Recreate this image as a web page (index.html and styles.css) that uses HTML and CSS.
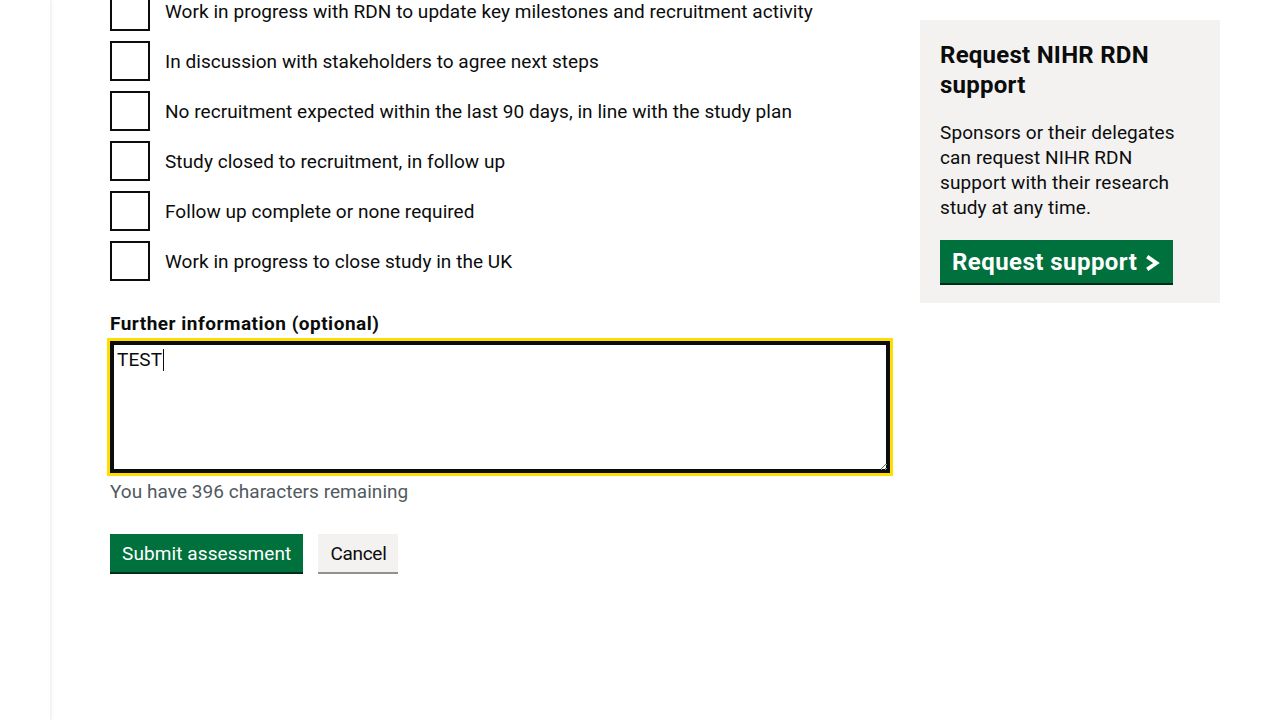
FILE: index.html
```html
<!DOCTYPE html>
<html lang="en">
<head>
<meta charset="utf-8">
<title>Assessment</title>
<link rel="stylesheet" href="styles.css">
</head>
<body>
<div class="page">
  <nav class="side-nav" aria-label="Side navigation"></nav>
  <main class="main">
    <form class="form-col">
      <div class="checkboxes">
        <div class="cb-item"><input class="cb-input" type="checkbox" id="c1"><label class="cb-label" for="c1">Work in progress with RDN to update key milestones and recruitment activity</label></div>
        <div class="cb-item"><input class="cb-input" type="checkbox" id="c2"><label class="cb-label" for="c2">In discussion with stakeholders to agree next steps</label></div>
        <div class="cb-item"><input class="cb-input" type="checkbox" id="c3"><label class="cb-label" for="c3">No recruitment expected within the last 90 days, in line with the study plan</label></div>
        <div class="cb-item"><input class="cb-input" type="checkbox" id="c4"><label class="cb-label" for="c4">Study closed to recruitment, in follow up</label></div>
        <div class="cb-item"><input class="cb-input" type="checkbox" id="c5"><label class="cb-label" for="c5">Follow up complete or none required</label></div>
        <div class="cb-item"><input class="cb-input" type="checkbox" id="c6"><label class="cb-label" for="c6">Work in progress to close study in the UK</label></div>
      </div>
      <div class="form-group">
        <label class="field-label" for="info">Further information (optional)</label>
        <div class="textarea-wrap">
          <textarea class="textarea is-focused" id="info" rows="5">TEST</textarea>
          <span class="caret"></span>
        </div>
        <div class="hint">You have 396 characters remaining</div>
      </div>
      <div class="actions">
        <button type="button" class="btn btn-primary">Submit assessment</button>
        <button type="button" class="btn btn-secondary">Cancel</button>
      </div>
    </form>
    <aside class="panel">
      <h2 class="panel-title">Request NIHR RDN support</h2>
      <p class="panel-text">Sponsors or their delegates can request NIHR RDN support with their research study at any time.</p>
      <a class="btn btn-primary btn-large" href="#">Request support
        <svg class="chevron" width="15" height="16" viewBox="0 0 15 16" aria-hidden="true"><path d="M2.2 1.6 L11.4 8 L2.2 14.4" fill="none" stroke="#fff" stroke-width="3.8" stroke-linejoin="miter" stroke-miterlimit="2"/></svg>
      </a>
    </aside>
  </main>
</div>
</body>
</html>
```
FILE: styles.css
```css
* { box-sizing: border-box; }
html, body { margin: 0; padding: 0; }
body {
  font-family: Roboto, "Liberation Sans", Arial, sans-serif;
  color: #0b0c0c;
  background: #fff;
  font-size: 19px;
  line-height: 25px;
  letter-spacing: 0.05px;
}
.page {
  display: flex;
  min-height: 720px;
  overflow: hidden;
}
.side-nav {
  width: 50px;
  flex: 0 0 50px;
  background: #fff;
  box-shadow: 1px 0 4px rgba(0, 0, 0, 0.09);
}
.main {
  flex: 1;
  display: grid;
  grid-template-columns: 780px 300px;
  column-gap: 30px;
  padding-left: 60px;
  align-items: start;
}
.form-col {
  margin-top: -9px;
}
.checkboxes {
  display: flex;
  flex-direction: column;
  gap: 10px;
  margin-bottom: 30px;
}
.cb-item {
  display: flex;
  align-items: flex-start;
  min-height: 40px;
}
.cb-input {
  appearance: none;
  -webkit-appearance: none;
  margin: 0;
  width: 40px;
  height: 40px;
  flex: 0 0 40px;
  border: 2px solid #0b0c0c;
  background: #fff;
}
.cb-label {
  padding: 8px 15px 5px;
  font-size: 19px;
  line-height: 25px;
}
.form-group {
  margin-bottom: 30px;
}
.field-label {
  display: block;
  font-weight: 700;
  font-size: 19px;
  line-height: 25px;
  margin-bottom: 5px;
  letter-spacing: 0.5px;
}
.textarea-wrap {
  position: relative;
}
.textarea {
  display: block;
  width: 100%;
  font-family: Roboto, "Liberation Sans", Arial, sans-serif;
  font-size: 19px;
  line-height: 23.75px;
  letter-spacing: 0.1px;
  color: #0b0c0c;
  padding: 5px;
  border: 2px solid #0b0c0c;
  border-radius: 0;
  margin: 0;
  resize: vertical;
  height: 132px;
}
.textarea.is-focused {
  outline: 3px solid #ffdd00;
  outline-offset: 0;
  box-shadow: inset 0 0 0 2px #0b0c0c;
}
.caret {
  position: absolute;
  left: 53px;
  top: 8px;
  width: 1px;
  height: 22px;
  background: #0b0c0c;
}
.hint {
  margin-top: 6px;
  color: #505a5f;
  font-size: 19px;
  line-height: 25px;
}
.actions {
  display: flex;
  gap: 15px;
  align-items: flex-start;
}
.btn {
  display: inline-flex;
  align-items: center;
  font-family: Roboto, "Liberation Sans", Arial, sans-serif;
  font-size: 19px;
  line-height: 19px;
  letter-spacing: 0.1px;
  padding: 8px 10px 7px;
  border: 2px solid transparent;
  border-radius: 0;
  margin: 0;
  cursor: pointer;
  text-decoration: none;
}
.btn-primary {
  background: #00703c;
  color: #fff;
  box-shadow: 0 2px 0 #002d18;
}
.btn-secondary {
  background: #f3f2f1;
  color: #0b0c0c;
  box-shadow: 0 2px 0 #929191;
  letter-spacing: -0.3px;
}
.panel {
  margin-top: 20px;
  background: #f3f2f1;
  padding: 20px;
}
.panel-title {
  margin: 0 0 20px;
  font-size: 24px;
  line-height: 30px;
  font-weight: 700;
  letter-spacing: 0.25px;
}
.panel-text {
  margin: 0 0 20px;
  font-size: 19px;
  line-height: 25px;
  letter-spacing: 0.1px;
}
.btn-large {
  font-size: 24px;
  line-height: 24px;
  font-weight: 700;
  letter-spacing: 0.45px;
  gap: 8px;
  padding-right: 11px;
}
.chevron {
  display: block;
  overflow: visible;
  margin-top: 1px;
}
```
